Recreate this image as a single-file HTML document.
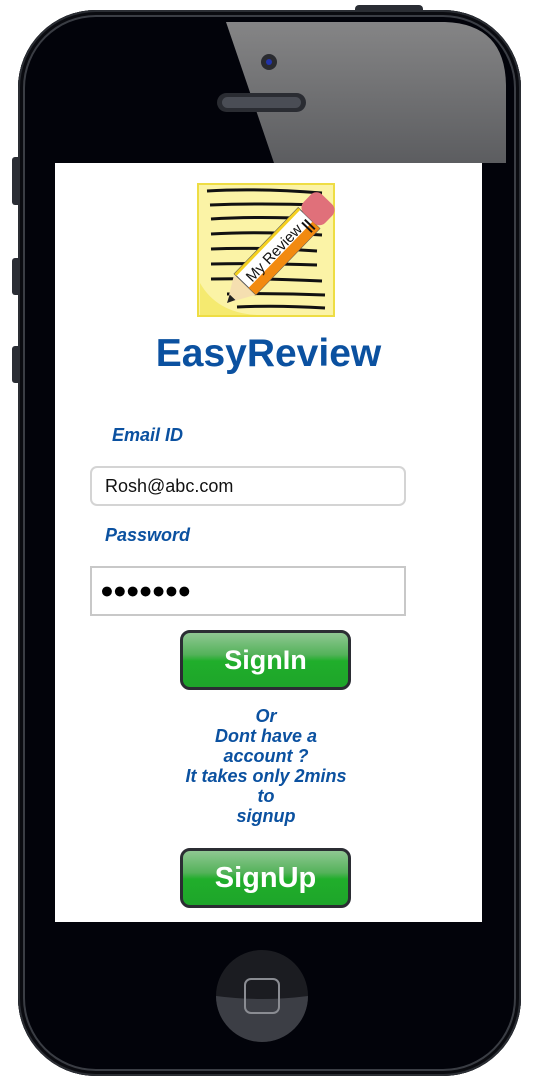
<!DOCTYPE html>
<html><head><meta charset="utf-8"><style>
html,body{margin:0;padding:0;background:#fff;}
body{width:538px;height:1084px;position:relative;overflow:hidden;font-family:"Liberation Sans",Arial,sans-serif;}
.abs{position:absolute;}
.phone{left:18px;top:10px;width:503px;height:1066px;border-radius:78px;background:#02030a;box-shadow:inset 0 0 0 2px #2a2d33,inset 0 0 0 5px #0a0b10,inset 0 0 0 7px #3a3d44;overflow:hidden;}
.gloss{left:0;top:0;width:538px;height:1084px;}
.sbtn{left:12px;width:8px;background:#2a2d34;border-radius:3px 0 0 3px;}
.screen{left:55px;top:163px;width:427px;height:759px;background:#fff;}
.lbl{color:#0b51a0;font-weight:bold;font-style:italic;font-size:18px;}
.inp{background:#fff;box-sizing:border-box;}
.btn{left:180px;width:171px;height:60px;box-sizing:border-box;border:3px solid #2b2d33;border-radius:10px;background:linear-gradient(#8fc792 0%,#54b25a 40%,#20ae2b 52%,#1ea52a 100%);color:#fff;font-weight:bold;text-align:center;font-size:27px;line-height:54px;}
</style></head><body>
<div class="abs sbtn" style="top:157px;height:48px"></div>
<div class="abs sbtn" style="top:258px;height:37px"></div>
<div class="abs sbtn" style="top:346px;height:37px"></div>
<div class="abs" style="left:355px;top:5px;width:68px;height:8px;background:#2a2d34;border-radius:4px 4px 0 0"></div>
<div class="abs phone"></div>
<svg class="abs gloss" viewBox="0 0 538 1084">
<defs><linearGradient id="g" x1="0" y1="0" x2="0" y2="1"><stop offset="0" stop-color="#858586"/><stop offset="1" stop-color="#5c5d60"/></linearGradient></defs>
<path d="M226 22 L445 22 Q505 24 506 85 L506 163 L274 163 Z" fill="url(#g)"/>
<circle cx="269" cy="62" r="8" fill="#2a2b30"/><circle cx="269" cy="62" r="3" fill="#2233aa"/>
<rect x="217" y="93" width="89" height="19" rx="9.5" fill="#2a2c32"/>
<rect x="222" y="97" width="79" height="11" rx="5.5" fill="#4a4d55"/>
<circle cx="262" cy="996" r="46" fill="#1b1c21"/>
<path d="M216 996 A46 46 0 0 0 308 996 Q262 1002 216 996Z" fill="#3c3e45"/>
<rect x="245" y="979" width="34" height="34" rx="6" fill="none" stroke="#8a8c92" stroke-width="2"/>
</svg>
<div class="abs screen"></div>
<svg class="abs" style="left:197px;top:183px" width="140" height="135" viewBox="0 0 140 135">
<rect x="1" y="1" width="136" height="132" fill="#fbf3a6" stroke="#eedd44" stroke-width="2"/>
<path d="M3 100 Q20 130 60 132 L3 132Z" fill="#f5ea70"/>
<g stroke="#111" stroke-width="3" fill="none">
<path d="M10 8 Q60 5 125 10"/><path d="M13 22 Q60 20 125 22"/><path d="M14 36 Q60 33 125 36"/><path d="M14 51 Q60 48 125 52"/><path d="M14 66 Q60 64 120 68"/><path d="M14 81 Q60 80 120 82"/><path d="M14 96 Q60 95 125 98"/><path d="M30 111 Q80 110 128 112"/><path d="M40 124 Q80 122 128 125"/>
</g>
<g transform="translate(30 120) rotate(-46)">
<path d="M0 0 L26 -15 L26 15Z" fill="#f5dfb0"/><path d="M0 0 L8 -4 L8 4Z" fill="#222"/>
<rect x="26" y="-15" width="92" height="30" fill="#fff" stroke="#555" stroke-width="1"/>
<rect x="26" y="5" width="92" height="10" fill="#f28a10"/>
<rect x="26" y="-15" width="92" height="3" fill="#f5d020"/>
<g stroke="#111" stroke-width="2"><path d="M110 -2 V12"/><path d="M114 -2 V12"/></g>
<rect x="118" y="-15" width="26" height="30" rx="8" fill="#e0707a"/>
<text x="32" y="4" font-size="15" font-family="Liberation Sans,sans-serif" fill="#111">My Review</text>
</g>
</svg>
<div class="abs" style="left:55px;width:427px;top:331px;text-align:center;color:#0b51a0;font-weight:bold;font-size:39px;line-height:46px">EasyReview</div>
<div class="abs lbl" style="left:112px;top:425px">Email ID</div>
<div class="abs inp" style="left:90px;top:466px;width:316px;height:40px;border:2px solid #d4d4d4;border-radius:7px;padding-left:13px;font-size:18px;line-height:36px;color:#111">Rosh@abc.com</div>
<div class="abs lbl" style="left:105px;top:525px">Password</div>
<div class="abs inp" style="left:90px;top:566px;width:316px;height:50px;border:2px solid #c8c8c8;padding-left:8px;font-size:23px;line-height:44px;color:#000;letter-spacing:-1px">●●●●●●●</div>
<div class="abs btn" style="top:630px">SignIn</div>
<div class="abs" style="left:156px;width:220px;top:706px;text-align:center;color:#0b51a0;font-weight:bold;font-style:italic;font-size:18px;line-height:20px">Or<br>Dont have a<br>account ?<br>It takes only 2mins<br>to<br>signup</div>
<div class="abs btn" style="top:848px;font-size:29px">SignUp</div>
</body></html>
